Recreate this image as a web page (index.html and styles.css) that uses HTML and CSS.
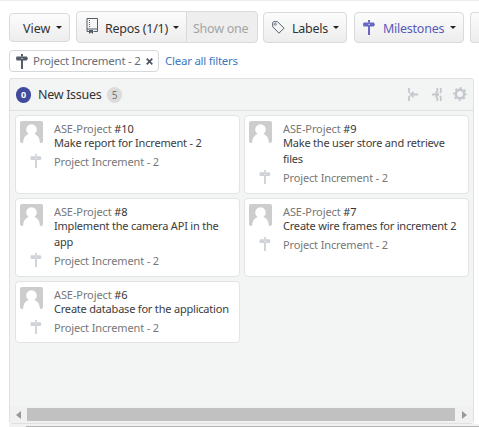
FILE: index.html
```html
<!DOCTYPE html>
<html lang="en">
<head>
<meta charset="utf-8">
<title>Board</title>
<link rel="stylesheet" href="styles.css">
</head>
<body>
<svg class="defs" width="0" height="0" aria-hidden="true">
  <symbol id="sign" viewBox="0 0 12 15"><path d="M5 0h2v2H5zM.5 2.500h10.300L12 4.500l-1.200 2H.5L0 4.500zM5 6.500h2V15H5zM5.500 1h1v5h-1z"/><path class="hole" d="M5.500 4h1v1h-1z"/></symbol>
  <symbol id="avatar" viewBox="0 0 23 22"><rect width="23" height="22" rx="2" fill="#cdcdcd"/><path d="M3 22c.3-5 2.200-8 5.500-9A5.300 5.300 0 1 1 14.500 13c3.300 1 5.200 4 5.500 9z" fill="#fff"/></symbol>
</svg>
<nav class="toolbar">
  <button class="btn view"><span>View</span><i class="caret"></i></button>
  <div class="group">
    <button class="btn repos"><svg class="book" viewBox="0 0 12 16" width="12" height="16"><path d="M3 13.500H1V.5h10.500v13H7.500M1 11h10.500" fill="none" stroke="#535d69"/><path d="M3 2h1v1H3zM3 4h1v1H3zM3 6h1v1H3zM3 8h1v1H3zM3 12h4v4l-2-1.500L3 16z" fill="#535d69"/></svg><span>Repos (1/1)</span><i class="caret"></i></button>
    <button class="btn one"><span>Show one</span></button>
  </div>
  <button class="btn labels"><svg class="tag" viewBox="0 0 13 13" width="13" height="13"><path d="M.7 1.700l.8-1h4l6.500 6.500-5 5L.7 5.800z" fill="none" stroke="#535d69"/><circle cx="3.300" cy="3.300" r="1" fill="none" stroke="#535d69" stroke-width=".8"/></svg><span>Labels</span><i class="caret"></i></button>
  <button class="btn miles"><svg class="sign-lg" width="12" height="15"><use href="#sign"/></svg><span>Milestones</span><i class="caret"></i></button>
  <button class="btn more"></button>
</nav>
<div class="filters">
  <div class="chip"><svg width="12" height="15"><use href="#sign"/></svg><span>Project Increment - 2</span><svg class="close" width="7" height="7" viewBox="0 0 7 7"><path d="M.7.7l5.600 5.600M6.300.7L.7 6.300" stroke="#4b5561" stroke-width="1.700"/></svg></div>
  <a class="clear">Clear all filters</a>
</div>
<section class="column">
  <header class="head">
    <span class="total">0</span><h2>New Issues</h2><span class="count">5</span>
    <div class="tools">
      <svg width="10" height="13" viewBox="0 0 10 13"><path d="M1 0v4l1 1M1 13V9l1-1M2 6.500h8M5.500 3.800L2.800 6.500l2.700 2.700" fill="none" stroke="#c4c8cd" stroke-width="1.800"/></svg>
      <svg width="10" height="13" viewBox="0 0 10 13"><path d="M5.300 0v4M5.300 9v4M8.800 0v4l-1 1M8.800 13V9l-1-1M0 6.500h7M3.500 3.800l2.700 2.700-2.700 2.700" fill="none" stroke="#c4c8cd" stroke-width="1.800"/></svg>
      <svg width="14" height="14" viewBox="-7 -7 14 14"><g fill="none" stroke="#c4c8cd"><circle r="4.200" stroke-width="2.400"/><circle r="5.900" stroke-width="1.900" stroke-dasharray="2.300 2.334" stroke-dashoffset="1.150"/></g></svg>
    </div>
  </header>
  <div class="cards">
    <article class="card"><svg class="avatar" width="23" height="22"><use href="#avatar"/></svg><div class="repo">ASE-Project <b>#10</b></div><div class="title">Make report for Increment - 2</div><svg class="sign" width="12" height="14"><use href="#sign"/></svg><div class="mile">Project Increment - 2</div></article>
    <article class="card"><svg class="avatar" width="23" height="22"><use href="#avatar"/></svg><div class="repo">ASE-Project <b>#9</b></div><div class="title">Make the user store and retrieve<br>files</div><svg class="sign" width="12" height="14"><use href="#sign"/></svg><div class="mile">Project Increment - 2</div></article>
    <article class="card"><svg class="avatar" width="23" height="22"><use href="#avatar"/></svg><div class="repo">ASE-Project <b>#8</b></div><div class="title">Implement the camera API in the<br>app</div><svg class="sign" width="12" height="14"><use href="#sign"/></svg><div class="mile">Project Increment - 2</div></article>
    <article class="card"><svg class="avatar" width="23" height="22"><use href="#avatar"/></svg><div class="repo">ASE-Project <b>#7</b></div><div class="title">Create wire frames for increment 2</div><svg class="sign" width="12" height="14"><use href="#sign"/></svg><div class="mile">Project Increment - 2</div></article>
    <article class="card"><svg class="avatar" width="23" height="22"><use href="#avatar"/></svg><div class="repo">ASE-Project <b>#6</b></div><div class="title">Create database for the application</div><svg class="sign" width="12" height="14"><use href="#sign"/></svg><div class="mile">Project Increment - 2</div></article>
  </div>
  <div class="scroll"><i class="left"></i><div class="thumb"></div><i class="right"></i></div>
</section>
<div class="page-scroll"><div class="page-thumb"></div></div>
</body>
</html>
```

FILE: styles.css
```css
* { box-sizing: border-box; }
body { margin: 0; width: 479px; height: 427px; overflow: hidden; background: #fff; border-top: 1px solid #ececec; font-family: "Noto Sans", "Open Sans", sans-serif; color: #333; }
.defs { position: absolute; }
.hole { fill: #fff; }
svg { flex: none; }
.toolbar { display: flex; align-items: center; width: 470px; height: 32px; margin: 10px 0 0 9px; }
.btn { display: flex; align-items: center; flex: none; height: 31px; margin: 0; padding: 0; border: 1px solid #d9dadc; border-radius: 4px; background: linear-gradient(#fcfcfc, #ededed); font: 12.5px/17px "Noto Sans", sans-serif; letter-spacing: -.25px; color: #333; white-space: nowrap; }
.btn span { padding-top: 2px; }
.caret { flex: none; width: 0; height: 0; border: 3px solid transparent; border-top-color: #222; border-bottom: 0; }
.btn .caret { margin: 0 7px 0 auto; }
.view { width: 61px; height: 29px; padding-left: 13px; letter-spacing: 0; }
.group { display: flex; margin: 0 6px; }
.repos { width: 111px; height: 32px; padding-left: 9px; border-radius: 4px 0 0 4px; }
.book { margin: -2px 7px 0 0; }
.one { width: 72px; height: 32px; margin-left: -1px; padding-left: 6px; border-radius: 0 4px 4px 0; background: #eee; color: #a5a5a5; }
.labels { width: 84px; margin-left: -1px; padding-left: 8px; }
.tag { margin-right: 7px; }
.miles { width: 110px; margin: 0 6px 0 7px; padding-left: 8px; color: #5a5ab8; }
.sign-lg { margin-right: 8px; fill: #6668c4; }
.more { width: 9px; border-right: 0; border-radius: 4px 0 0 4px; }
.filters { display: flex; align-items: center; height: 22px; margin: 7px 0 0 9px; font-size: 11.5px; letter-spacing: -.25px; line-height: 16px; white-space: nowrap; }
.chip { display: flex; align-items: center; width: 150px; height: 22px; padding-left: 6px; border: 1px solid #d5d7da; border-radius: 4px; color: #66707c; fill: #535d69; }
.chip span { margin-left: 5px; }
.close { margin: 0 5px 0 auto; }
.clear { margin-left: 6px; color: #4078c0; }
.column { display: flex; flex-direction: column; width: 465px; height: 346px; margin: 6px 0 0 9px; border: 1px solid #dfe1e1; border-radius: 3px; background: #f3f5f5; }
.head { display: flex; align-items: center; height: 32px; padding-left: 6px; border-bottom: 1px solid #e1e3e3; }
.total, .count { width: 15px; height: 16px; border-radius: 8px; text-align: center; font-size: 10px; line-height: 16px; }
.total { background: #414b9e; color: #fff; font-weight: 700; font-size: 9px; }
.count { background: #dcdcdc; color: #777; }
h2 { width: 63px; margin: 0 6px 0 7px; font-size: 12.5px; letter-spacing: -.3px; line-height: 17px; font-weight: 400; white-space: nowrap; }
.tools { display: flex; align-items: center; gap: 14px; margin: -1px 6px 0 auto; }
.tools svg:last-child { margin-left: -3px; }
.cards { display: grid; grid-template: 79px 79px 62px / 225px 225px; gap: 4px; padding: 4px 5px 0; }
.card { display: grid; grid-template-columns: 34px 1fr; grid-template-rows: 14px auto 19px; align-content: start; padding: 5px 0 0 4px; border: 1px solid #e2e4e4; border-radius: 4px; background: #fff; font-size: 11px; line-height: 16px; white-space: nowrap; fill: #cfd2d7; }
.avatar { grid-area: 1 / 1 / 3 / 2; height: 22px; margin-bottom: -6px; }
.repo { color: #777; line-height: 15px; letter-spacing: -.1px; }
.repo b { color: #333; font-weight: 400; }
.title { letter-spacing: -.2px; color: #3c3c3c; }
.mile { color: #777; padding-top: 3px; letter-spacing: -.14px; }
.sign { margin: 3px 0 0 10px; }
.scroll { display: flex; align-items: center; height: 17px; margin-top: auto; padding: 0 6px; background: #f1f1f1; }
.thumb { flex: 1; height: 13px; margin: 0 7px 0 6px; background: #c1c1c1; }
.left, .right { border: 4px solid transparent; }
.left { border-right: 5px solid #999; border-left: 0; }
.right { border-left: 5px solid #999; border-right: 0; }
.page-scroll { height: 3px; margin-left: 9px; padding: 2px 0 0 17px; background: #f1f1f1; }
.page-thumb { height: 1px; background: #b5b5b5; }
```
